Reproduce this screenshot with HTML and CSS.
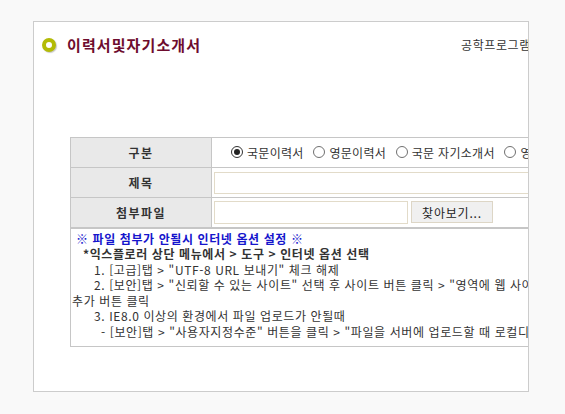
FILE: index.html
```html
<!DOCTYPE html>
<html lang="ko">
<head>
<meta charset="utf-8">
<title>이력서및자기소개서</title>
<link rel="stylesheet" href="styles.css">
</head>
<body>
<div class="panel">
  <div class="inner">
    <div class="head">
      <div class="title"><span class="ring"></span><h1>이력서및자기소개서</h1></div>
      <div class="crumb">공학프로그램 &gt; 이력서및자기소개서</div>
    </div>
    <table class="form">
      <colgroup><col class="c1"><col class="c2"></colgroup>
      <tr>
        <th>구분</th>
        <td class="radios">
          <label><input type="radio" name="kind" checked>국문이력서</label>
          <label><input type="radio" name="kind">영문이력서</label>
          <label><input type="radio" name="kind">국문 자기소개서</label>
          <label><input type="radio" name="kind">영문 자기소개서</label>
        </td>
      </tr>
      <tr>
        <th>제목</th>
        <td><input type="text" class="text-in"></td>
      </tr>
      <tr class="last">
        <th>첨부파일</th>
        <td><input type="text" class="file-in"><button type="button" class="browse">찾아보기...</button></td>
      </tr>
      <tr>
        <td colspan="2" class="info">
          <div class="l-warn">※ 파일 첨부가 안될시 인터넷 옵션 설정 ※</div>
          <div class="l-head">*익스플로러 상단 메뉴에서 &gt; 도구 &gt; 인터넷 옵션 선택</div>
          <div class="l-step">1. [고급]탭 &gt; "UTF-8 URL 보내기" 체크 해제</div>
          <div class="l-step">2. [보안]탭 &gt; "신뢰할 수 있는 사이트" 선택 후 사이트 버튼 클릭 &gt; "영역에 웹 사이트 추가" 에서 주소 입력 후<br>추가 버튼 클릭</div>
          <div class="l-step">3. IE8.0 이상의 환경에서 파일 업로드가 안될때</div>
          <div class="l-sub">- [보안]탭 &gt; "사용자지정수준" 버튼을 클릭 &gt; "파일을 서버에 업로드할 때 로컬디렉토리 경로 포함" 사용</div>
        </td>
      </tr>
    </table>
  </div>
</div>
</body>
</html>
```

FILE: styles.css
```css
html, body {
  margin: 0;
  padding: 0;
  background: #f9f9f9;
}
body {
  font-family: "Noto Sans CJK KR", "Noto Sans", sans-serif;
  font-size: 12px;
  color: #333;
}
.panel {
  margin: 21px 0 0 33px;
  width: 494px;
  height: 369px;
  border: 1px solid #cccccc;
  background: #fff;
  overflow: hidden;
}
.inner {
  width: 640px;
}
.head {
  display: flex;
  align-items: center;
  height: 44px;
}
.title {
  flex: 0 0 427px;
  display: flex;
  align-items: center;
  box-sizing: border-box;
  padding-left: 8px;
}
.ring {
  width: 14px;
  height: 14px;
  box-sizing: border-box;
  border: 4px solid #b3bb06;
  border-radius: 50%;
  background: #fff;
  box-shadow: 1px 1px 1px #c8c8c8;
  margin-top: 2px;
}
.title h1 {
  margin: 0 0 0 11px;
  font-size: 15px;
  font-weight: bold;
  color: #6e0c2e;
  letter-spacing: 1.1px;
}
.crumb {
  white-space: nowrap;
  color: #333;
  letter-spacing: 0.6px;
  margin-top: 1px;
}
.form {
  margin: 71px 0 0 36px;
  border-collapse: collapse;
  table-layout: fixed;
  width: 580px;
}
.c1 { width: 141px; }
.form th, .form td {
  border: 1px solid #c6c6c6;
  height: 30px;
  padding: 0 2px;
  box-sizing: border-box;
}
.form th {
  background: #e9e9e9;
  font-weight: bold;
  color: #333;
  text-align: center;
  letter-spacing: 1.5px;
}
.form tr.last th, .form tr.last td {
  border-bottom: 2px solid #c6c6c6;
}
.radios {
  white-space: nowrap;
  padding-left: 19px !important;
  letter-spacing: 0.3px;
}
.radios label {
  display: inline-flex;
  align-items: center;
  margin-right: 6px;
}
.radios input {
  appearance: none;
  -webkit-appearance: none;
  width: 12px;
  height: 12px;
  margin: 0 4px 0 0;
  border: 1px solid #707070;
  border-radius: 50%;
  background: #fff;
  box-sizing: border-box;
  position: relative;
}
.radios input:checked {
  border-color: #333;
}
.radios input:checked::after {
  content: "";
  position: absolute;
  left: 2px;
  top: 2px;
  width: 6px;
  height: 6px;
  border-radius: 50%;
  background: #222;
}
.text-in {
  display: block;
  width: 420px;
  height: 22px;
  box-sizing: border-box;
  border: 1px solid #e2dbc9;
  margin: 0;
  padding: 0;
}
.form td:has(.file-in) {
  white-space: nowrap;
}
.file-in {
  vertical-align: middle;
  width: 194px;
  height: 23px;
  box-sizing: border-box;
  border: 1px solid #e2dbc9;
  margin: 0 3px 0 0;
  padding: 0;
}
.browse {
  vertical-align: middle;
  width: 82px;
  height: 22px;
  box-sizing: border-box;
  border: 1px solid #ddd6c6;
  background: #f0f0f0;
  font-family: "Noto Sans CJK KR", "Noto Sans", sans-serif;
  font-size: 12px;
  letter-spacing: 0.8px;
  color: #222;
  padding: 0;
  margin: 0;
}
.form td.info {
  height: auto;
  padding: 2px 2px 7px 1px;
  line-height: 15.5px;
  white-space: nowrap;
  letter-spacing: 0.6px;
}
.l-warn {
  padding-left: 4px;
  color: #1515cc;
  font-weight: bold;
}
.l-head {
  padding-left: 11px;
  font-weight: bold;
  color: #333;
}
.l-step {
  text-indent: 22px;
}
.l-sub {
  padding-left: 29px;
}
```
